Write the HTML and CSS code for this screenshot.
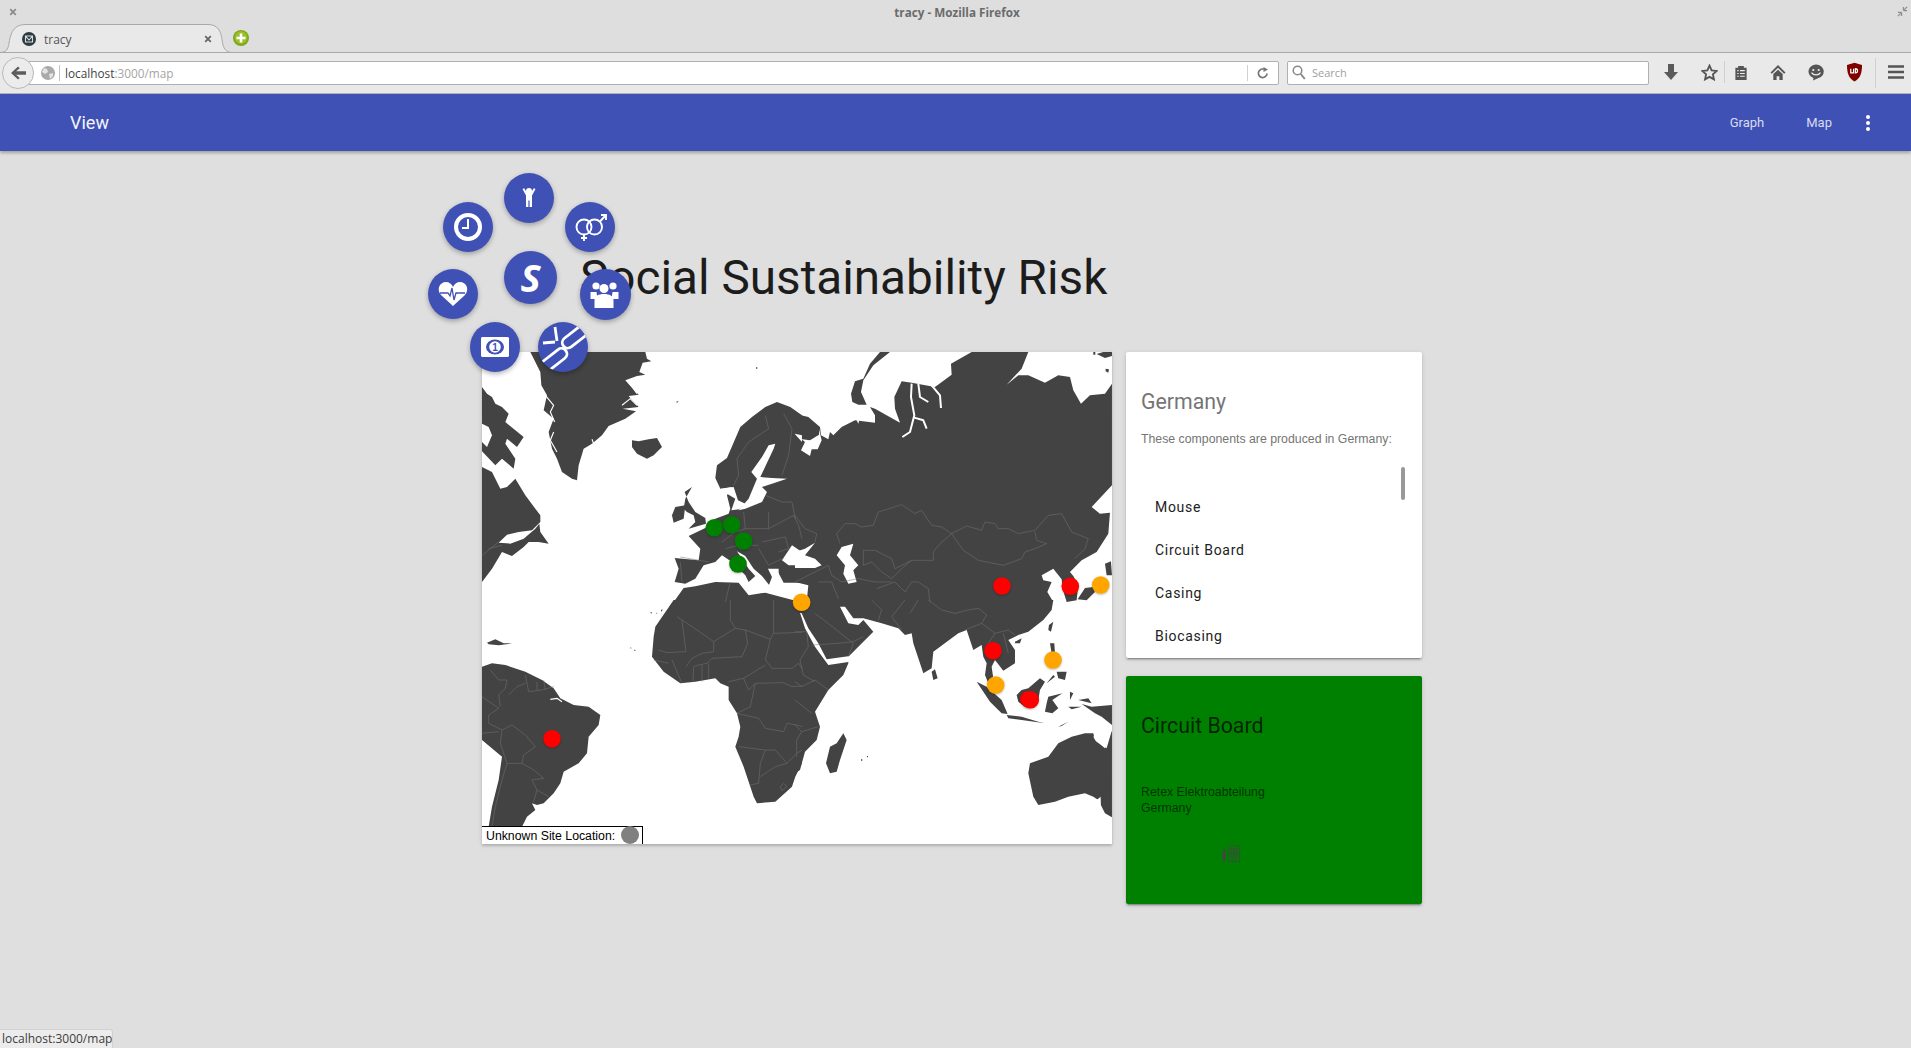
FILE: index.html
```html
<!DOCTYPE html>
<html lang="en">
<head>
<meta charset="utf-8">
<title>tracy - Mozilla Firefox</title>
<link rel="stylesheet" href="styles.css">
</head>
<body>
<header class="chrome">
  <div class="titlebar">
    <svg class="win-close" viewBox="0 0 10 10"><path d="M1.5 1.5l7 7M8.5 1.5l-7 7"/></svg>
    <span class="win-title">tracy - Mozilla Firefox</span>
    <svg class="win-restore" viewBox="0 0 12 12"><path d="M7 5V1M7 5h4M5 7v4M5 7H1M7 5l4-4M5 7l-4 4"/></svg>
  </div>
  <div class="tabstrip">
    <div class="tab">
      <svg class="tab-shape" viewBox="0 0 232 29"><path d="M0 28.500c6 0 8-3 9-9 1-7 3-19 16-19h183c10 0 13 7 14 15 1 9 4 13 10 13z"/></svg>
      <svg class="favicon" viewBox="0 0 14 14"><circle cx="7" cy="7" r="7" fill="#2d3a42"/><path d="M3.500 4h7v6h-7zM3.500 4L7 8l3.500-4" fill="none" stroke="#d8dde0" stroke-width="1.100"/></svg>
      <span class="tab-label">tracy</span>
      <svg class="tab-close" viewBox="0 0 10 10"><path d="M1.500 1.500l7 7M8.500 1.500l-7 7"/></svg>
    </div>
    <svg class="newtab" viewBox="0 0 16 16"><circle cx="8" cy="8" r="8" fill="#7fa81a"/><circle cx="8" cy="7.500" r="6.200" fill="#9bc02c"/><path d="M8 3.500v9M3.500 8h9" stroke="#fff" stroke-width="2.600"/></svg>
  </div>
  <div class="toolbar">
    <div class="back">
      <svg viewBox="0 0 16 14"><path d="M7.500 0L0 7l7.500 7 1.800-1.800L5.500 8.800H16V5.200H5.500l3.800-3.400z"/></svg>
    </div>
    <div class="urlbar">
      <svg class="globe" viewBox="0 0 14 14"><circle cx="7" cy="7" r="7" fill="#aaa"/><path d="M3 2l3 1 1 3-3 2-3-2zM8 8l4-1 0 3-3 3z" fill="#e4e4e4"/></svg>
      <span class="url"><span class="url-host">localhost</span>:3000/map</span>
      <span class="url-reload">
        <svg viewBox="0 0 12 12"><path d="M10 6.500A4.300 4.300 0 1 1 6 2h1.500" fill="none" stroke="#777" stroke-width="1.700"/><path d="M6.500 0v5L11 2.500z" fill="#777"/></svg>
      </span>
    </div>
    <div class="searchbar">
      <svg viewBox="0 0 14 15"><circle cx="5.500" cy="5.500" r="4.300" fill="none" stroke="#888" stroke-width="1.500"/><path d="M8.800 9l4 5" stroke="#888" stroke-width="2"/></svg>
      <span>Search</span>
    </div>
    <div class="tools">
      <svg class="t-down" viewBox="0 0 14 16"><path d="M4 0h6v8h4l-7 8-7-8h4z"/></svg>
      <svg class="t-star" viewBox="0 0 16 16"><path d="M8 1.500l2 4.500 4.800.500-3.600 3.200 1 4.800L8 12.100l-4.200 2.400 1-4.800L1.200 6.500 6 6z" fill="none" stroke="#555" stroke-width="1.700"/></svg>
      <span class="t-sep"></span>
      <svg class="t-clip" viewBox="0 0 14 16"><path d="M1 3h3V1h6v2h3v13H1z" fill="#555"/><path d="M3 6h1.500M6 6h5M3 9h1.500M6 9h5M3 12h1.500M6 12h5" stroke="#eee" stroke-width="1.200"/></svg>
      <svg class="t-home" viewBox="0 0 16 16"><path d="M8 0l8 8-1.500 1.200L8 3 1.500 9.200 0 8z" fill="#555"/><path d="M3 9.500L8 5l5 4.500V16H9.500v-4h-3v4H3z" fill="#555"/></svg>
      <svg class="t-chat" viewBox="0 0 16 16"><path d="M8 0a7.500 7 0 0 1 2 13.800L5 16l.5-2.400A7.500 7 0 0 1 8 0z" fill="#555"/><circle cx="5.300" cy="5.500" r="1.100" fill="#eee"/><circle cx="10.700" cy="5.500" r="1.100" fill="#eee"/><path d="M3.500 8.200c2 3 7 3 9 0" fill="none" stroke="#eee" stroke-width="1.200"/></svg>
      <svg class="t-ub" viewBox="0 0 16 20"><path d="M8 0l8 2.500c0 9-2 14.500-8 17.500-6-3-8-8.500-8-17.500z" fill="#800000"/><path d="M4 6.500v4.500h3V6.500M9 6.500v4.500c3 0 3-4.500 0-4.500z" fill="none" stroke="#fff" stroke-width="1.300"/></svg>
      <span class="t-sep t-sep-menu"></span>
      <svg class="t-menu" viewBox="0 0 16 14"><path d="M0 1.500h16M0 7h16M0 12.500h16" stroke="#555" stroke-width="2.600"/></svg>
    </div>
  </div>
</header>

<nav class="appbar">
  <span class="app-title">View</span>
  <span class="app-spacer"></span>
  <a class="app-link app-link-graph">Graph</a>
  <a class="app-link app-link-map">Map</a>
  <svg class="app-more" viewBox="0 0 4 16"><circle cx="2" cy="2" r="2"/><circle cx="2" cy="8" r="2"/><circle cx="2" cy="14" r="2"/></svg>
</nav>

<main class="page">
  <div class="content">
    <h1 class="headline">Social Sustainability Risk</h1>
    <div class="grid">
      <section class="map-card">
        <svg class="world" viewBox="0 0 630 492">
          <g class="land">
            <g class="tile-nw">
              <path d="M145 0H490L495 20 508 28 482 32 472 60 490 68 465 72 430 85 445 102 470 128 440 132 470 165 422 170 462 178 430 200 380 222 360 250 330 275 305 290 290 340 285 385 270 380 240 360 225 320 210 290 200 240 215 200 185 175 195 130 178 100 175 60 160 30z"/>
              <path d="M0 105L15 125 30 135 40 155 60 165 80 185 70 210 100 235 125 255 105 285 75 260 70 275 100 320 95 350 60 320 40 340 0 298z"/>
              <path d="M0 345L30 360 55 410 75 405 100 380 130 430 160 470 175 490 175 510 150 535 110 540 75 548 50 572 85 575 125 560 160 530 172 515 175 540 200 575 170 570 140 570 125 585 90 612 60 600 30 650 0 690z"/>
              <path d="M450 265L470 268 500 262 525 258 540 285 515 310 495 320 465 305 450 285z"/>
              <path d="M630 405L608 420 620 450 640 480 670 498 672 515 620 530 640 510 635 490 615 480 605 470 610 440z"/>
              <path d="M580 465L610 460 605 500 575 512 570 490z"/>
              <path d="M715 410L700 378 705 340 735 318 775 225 810 195 850 165 885 150 925 165 960 190V692H905L888 660 885 650 862 700 840 672 815 650 790 612 765 598 800 650 820 672 800 690 790 670 750 630 720 610 700 630 665 640 640 680 610 695 578 690 590 650 578 618 650 625 655 590 620 552 670 528 700 500 740 485 745 470 735 430 750 405z"/>
              <path d="M575 750L605 708 640 703 700 690 770 692 800 730 850 722 935 745 960 750z"/>
              <path d="M822 46h4v4h-4zM582 150l8-4-4 6z"/>
            </g>
            <g class="tile-sw">
              <path d="M575 0L520 80 515 110 510 170 545 215 595 250 640 245 700 235 715 250 740 260 740 300 765 340 775 380 770 410 760 440 785 500 815 590 825 610 880 605 930 560 940 530 960 490V0z"/>
              <path d="M0 200L30 190 70 195 130 215 180 240 215 265 235 295 275 315 320 320 355 345 350 375 320 410 315 460 290 490 245 515 235 550 215 580 185 610 165 615 150 610 160 630 135 650 120 680H20L30 620 50 540 60 470 0 420z"/>
              <path d="M15 128L40 118 65 130 90 130 50 136 20 133z"/>
              <path d="M505 36l6 2-4 3zM522 38l5 1-3 2zM537 30l5-2-3 8zM445 142l4 2-3 2zM458 148l3 5-4 0z"/>
            </g>
            <g class="tile-ne">
              <path d="M0 185L40 195 75 225 78 250 100 262 105 240 115 250 140 225 180 205 240 212 240 190 225 165 240 170 315 212 300 170 298 135 320 88 350 92 420 105 470 68 468 35 530 0H700L680 50 635 98 670 70 700 70 750 92 790 70 825 75 835 115 858 155 885 130 930 125 951 95V400L890 465 915 485 945 482 940 545 905 600 860 625 825 660 835 672 850 700 845 745 815 750 803 710 800 682 775 650 740 670 745 685 770 690 757 720 775 750H35L40 700 0 690z"/>
              <path d="M168 125L180 88 205 80 225 35 255 0H285L235 40 205 85 198 120 215 158 190 158 172 150z"/>
              <path d="M905 6L925 0H951V12L930 18zM932 50l10 2-2 10-8-4zM895 0h6v8h-6z"/>
              <path d="M930 635L948 628 951 670 935 670zM895 705L870 708 848 742 875 745 900 720z"/>
            </g>
            <g class="tile-se">
              <path d="M0 0H775L770 30 745 60 700 95 670 105 640 120 660 150 660 190 625 212 600 180 590 200 595 235 605 262 598 280 580 250 570 225 575 190 565 170 560 135 535 150 515 90 490 100 415 155 410 205 385 220 355 130 350 100 330 105 310 85 260 70 205 55 175 55 150 20 135 20 160 70 190 75 205 60 235 95 160 170V190L145 225 100 270 60 335 75 380 65 420 30 455 15 510 0 520z"/>
              <path d="M410 215L420 208 428 235 415 240z"/>
              <path d="M145 400L155 420 135 480 125 515 105 520 93 490 105 440 125 430z"/>
              <path d="M545 245L575 260 620 300 638 342 620 340 585 305z"/>
              <path d="M665 285L680 270 700 265 735 235 750 245 735 270 730 300 715 320 690 320 670 305z"/>
              <path d="M635 345L680 350 730 365 750 370 680 360 640 355z"/>
              <path d="M760 290L802 280 772 300 790 325 772 340 750 335 755 310z"/>
              <path d="M765 130L778 130 780 160 770 160zM785 215L815 215 810 240 790 235zM762 75L775 65 768 95 760 90zM660 125L680 115 675 130 660 130zM755 250L775 225 780 230zM825 275L835 280 825 300zM790 380L820 365 800 378zM820 320L860 320 830 328zM850 300L880 295 890 310z"/>
              <path d="M890 320L951 315V375L920 350 900 340 860 312z"/>
              <path d="M705 490L760 470 790 430 830 410 870 400 895 400 900 420 930 445 951 390V652L930 640 910 600 895 590 870 580 820 590 780 605 730 615 715 590 700 520z"/>
              <path d="M198 478h4v4h-4zM216 468h3v4h-3z"/>
            </g>
          </g>
          <g class="seas">
            <g class="tile-nw">
              <path d="M880 275L860 280 840 315 808 360 825 380 800 440 770 475 790 470 840 450 855 420 840 405 870 395 915 380 870 378 835 375 875 290z"/>
              <path d="M712 412L755 405 768 445 790 455 772 472 748 475 760 440 735 425z"/>
              <path d="M900 625L930 580 960 600V640H920z"/>
              <path d="M858 650L890 650 890 690 860 702 870 675z"/>
              <path d="M938 245L960 270V250z"/>
              <path d="M0 215L20 225 30 250 15 285 0 270z"/>
            </g>
            <g class="tile-ne">
              <path d="M0 600L30 590 60 572 30 610 60 620 80 640 60 648H0z"/>
              <path d="M125 610L140 585 175 575 165 610 190 640 175 655 185 690 160 695 145 665 150 640z"/>
              <path d="M0 245L30 270 18 295 45 312 50 292 68 292 80 265 72 232 72 248 45 265 22 262z"/>
              <path d="M150 195a8 8 0 1 0 .1 0zM185 205l8 0-3 10z"/>
            </g>
            <g class="tile-ne fjords">
              <path d="M350 95L348 135 358 190 345 240 322 255M358 197L385 205 395 230M370 95L375 135 400 150M410 100L435 130 438 168"/>
            </g>
            <g class="tile-nw fjords thin">
              <path d="M190 130L215 160 205 180 218 210M215 240L205 265 225 300M440 90L465 125M420 160L445 140 465 160M330 262L335 275"/>
            </g>
            <g class="tile-sw fjords thin">
              <path d="M205 298L225 295 240 305"/>
            </g>
            <g class="tile-se">
              <path d="M15 38L30 85 60 140 85 175 100 195 165 185 165 168 95 178 70 130 40 85 20 40z"/>
              <path d="M895 410L945 375 951 390 935 445 905 425z"/>
              <path d="M905 600L917 590 918 625 900 625z"/>
            </g>
          </g>
          <g class="borders">
            <g class="tile-nw">
              <path d="M850 190L860 230 800 270 765 320 770 370 755 400M905 185L930 230 920 310 900 370M785 480L790 530 760 540 720 570M860 480V530H790M860 530L935 490 950 520 960 560M840 570L910 555 920 590 890 600M850 430L900 450 930 450 940 500M595 615L680 630M595 630L600 690M730 590L770 580 830 580M830 590L860 640 900 620M0 610L50 570M745 690L730 750M20 590L60 580"/>
            </g>
            <g class="tile-sw">
              <path d="M585 50L660 100 695 125 760 85 790 90 865 118 875 100 960 97M875 0V100M745 0V60L760 85M695 125V155L660 160 630 175 612 200M600 60L612 155 555 158 530 150M790 90L797 130 780 170 690 175 675 190 650 195 635 200 633 245M865 118L850 180 870 205 930 205 950 190 960 205M850 195L785 235 740 245M785 235L800 270 820 250 905 248 930 260 960 258M820 250L805 320 765 340 830 355 850 385 905 395 915 370 945 375 960 380M770 440L850 450 880 450 915 490 945 460 960 450M850 450L835 490 830 550 805 555M835 530L880 500 915 490M895 560L905 550 915 560 900 572zM660 195V245M680 190V235M570 180L600 250M515 180L560 190M0 290L50 325 20 345 20 370 60 390 90 375 130 405 160 440 125 465 120 490 155 510 185 535 150 540 165 570 155 605M60 390L55 430 75 490 60 540 40 620 30 680M75 490H120M25 210L50 240 75 240 70 265 50 285 55 320M130 225L140 275 180 270 215 260M165 245V270M185 240L190 270M80 285L105 260 130 250M0 400L50 395M165 570L200 590"/>
            </g>
            <g class="tile-ne">
              <path d="M0 490L30 530 65 545 60 570M125 545L150 515 180 515 200 525 235 520 250 480 320 458 360 485 380 475 410 520 440 525 470 545 515 522 560 535 570 510 600 515 610 530 640 530 670 545 720 535 760 490 800 485 830 540 880 560 870 590 840 620M125 545L135 575M470 545L505 595 550 625 625 640 680 620 690 600 720 590 755 575 725 565 720 540M470 545L435 575 415 600 415 625 350 625 320 650 290 680M205 595V640L230 630 260 660 290 680M205 595H240L290 620 300 650 350 625M100 640L110 670 140 690 190 680 240 690 290 690M245 710L300 690 330 720 350 690H370L400 710 405 750M0 690L80 650 100 640M70 690L110 690 130 740"/>
            </g>
            <g class="tile-se">
              <path d="M230 0L260 30 250 60M330 0L290 50 320 90M370 0L345 40M400 0L440 30 480 40 520 30 550 25 575 45 560 70 510 90M560 70L600 100 640 90 660 105M600 100L580 130M625 100L640 160M0 95H35L40 140 15 180 25 225 60 245M60 40L125 90 175 130 160 170M50 135L130 130 175 125 205 110M0 245L20 260 60 240 100 270M0 300L50 340M0 375L20 395 70 380M20 395L5 420V470"/>
            </g>
          </g>
          <g class="markers">
            <circle class="m-green" cx="232.300" cy="175.700" r="8.800"/>
            <circle class="m-green" cx="249.700" cy="172.700" r="8.800"/>
            <circle class="m-green" cx="261.700" cy="189" r="8.800"/>
            <circle class="m-green" cx="256" cy="212" r="8.800"/>
            <circle class="m-orange" cx="319.600" cy="250.300" r="8.800"/>
            <circle class="m-red" cx="520" cy="234" r="8.800"/>
            <circle class="m-red" cx="588.300" cy="234.300" r="8.800"/>
            <circle class="m-orange" cx="618.700" cy="233" r="8.800"/>
            <circle class="m-red" cx="511" cy="298.700" r="8.800"/>
            <circle class="m-orange" cx="571" cy="308" r="8.800"/>
            <circle class="m-orange" cx="513.700" cy="333" r="8.800"/>
            <circle class="m-red" cx="546" cy="347.200" r="8"/>
            <circle class="m-red" cx="548.300" cy="347.700" r="8.800"/>
            <circle class="m-red" cx="70" cy="386.700" r="8.800"/>
          </g>
        </svg>
        <div class="legend">
          <span>Unknown Site Location:</span>
          <i class="legend-dot"></i>
        </div>
      </section>
      <aside class="side">
        <section class="card card-country">
          <h2 class="card-title">Germany</h2>
          <p class="card-text">These components are produced in Germany:</p>
          <div class="scrollbar"></div>
          <ul class="comp-list">
            <li>Mouse</li>
            <li>Circuit Board</li>
            <li>Casing</li>
            <li>Biocasing</li>
          </ul>
        </section>
        <section class="card card-site">
          <h2 class="card-title">Circuit Board</h2>
          <p class="site-text">Retex Elektroabteilung<br>Germany</p>
          <svg class="site-icon" viewBox="0 0 18 17"><circle cx="2.200" cy="5.500" r="1.500" fill="#444"/><path d="M.5 7.500h3.400v5l-.8 4H1.300l-.8-4z" fill="#444"/><path d="M6.500 1h11v15.500h-11zM8.500 3.500h7M8.500 6h7M8.500 8.500h7M8.500 11h7M9 3v8.500M12 3v8.500M15 3v8.500M10 16v-3h4v3" fill="none" stroke="#444" stroke-width=".8"/></svg>
        </section>
      </aside>
    </div>
    <div class="radial">
      <button class="rb rb-center">S</button>
      <button class="rb rb-top"><svg viewBox="-25 -25 50 50"><circle cx="0" cy="-7" r="3" fill="#fff"/><path d="M-6.500-9l1.800-.8L-2-5H2l2.700-4.800 1.800.8-3.500 6.500V9H.6V2.500H-.6V9H-3V-2.500z" fill="#fff"/></svg></button>
      <button class="rb rb-clock"><svg viewBox="-25 -25 50 50"><circle r="12" fill="none" stroke="#fff" stroke-width="4"/><path d="M0-8V1H-6" fill="none" stroke="#fff" stroke-width="2"/></svg></button>
      <button class="rb rb-gender"><svg viewBox="-25 -25 50 50"><g fill="none" stroke="#fff" stroke-width="1.900"><circle cx="-6" cy="0" r="7.500"/><circle cx="4.500" cy="0" r="7.500"/><path d="M-6 7.500v6.500M-9 11h6M10 -5.500l5.500-6M11-12h5v5"/></g></svg></button>
      <button class="rb rb-heart"><svg viewBox="-25 -25 50 50"><path d="M0 12L-12 1C-17-5-13-12-7-12-4-12-1-10 0-7 1-10 4-12 7-12 13-12 17-5 12 1z" fill="#fff"/><path d="M-13-1h8l2 3 2-8 2 12 2-7h9" fill="none" stroke="#3f51b5" stroke-width="1.300"/></svg></button>
      <button class="rb rb-group"><svg viewBox="-25 -25 50 50"><g fill="#fff"><circle cx="-9" cy="-9" r="3.600"/><circle cx="8" cy="-9" r="3.600"/><circle cx="-1" cy="-6.500" r="4.500"/><path d="M-14.500-3h6l1 7h-7zM13.500-3h-6l-1 7h7z"/><path d="M-10.500 13V5c0-4 4-6 9.500-6s9.500 2 9.500 6v8z"/></g></svg></button>
      <button class="rb rb-money"><svg viewBox="-25 -25 50 50"><path d="M-13-10H13l1 1V9l-1 1H-13l-1-1V-9z" fill="#fff"/><ellipse rx="9" ry="7.500" fill="#3f51b5"/><circle r="5.800" fill="#fff"/><text class="money-one" x="0" y="3.800" text-anchor="middle">1</text></svg></button>
      <button class="rb rb-chain"><svg viewBox="-25 -25 50 50"><g fill="none" stroke="#fff" stroke-width="2.800"><rect x="1" y="-6" width="32" height="11" rx="5.500" transform="rotate(-38)"/><rect x="-34" y="-1" width="34" height="11" rx="5.500" transform="rotate(-38)"/><path d="M-8-20l2 14M-20-4l12-1"/></g></svg></button>
    </div>
  </div>
</main>

<div class="status">localhost:3000/map</div>
</body>
</html>
```

FILE: styles.css
```css
* { box-sizing: border-box; }
html, body { margin: 0; height: 100%; }
body {
  background: #dfdfdf;
  font-family: Roboto, "Liberation Sans", sans-serif;
  overflow: hidden;
  display: flex;
  flex-direction: column;
  height: 1048px;
  position: relative;
}

/* browser chrome */
.chrome { background: #dedede; font-family: "Open Sans", sans-serif; flex: none; }
.titlebar {
  height: 24px;
  position: relative;
  display: flex;
  align-items: center;
  justify-content: center;
  padding-left: 3px;
}
.win-title { font-size: 11.700px; font-weight: 700; color: #6b6b6b; }
.win-close { position: absolute; left: 9px; top: 8px; width: 8px; height: 8px; }
.win-close path, .tab-close path { stroke: #8a8a8a; stroke-width: 2.200; fill: none; }
.win-restore { position: absolute; right: 3px; top: 6px; width: 11px; height: 11px; }
.win-restore path { stroke: #8e8e8e; stroke-width: 1.400; fill: none; }
.tabstrip {
  height: 29px;
  display: flex;
  align-items: center;
  border-bottom: 1px solid #a9a9a9;
}
.tab {
  width: 232px;
  height: 29px;
  position: relative;
  display: flex;
  align-items: center;
  padding-left: 22px;
  padding-top: 1px;
  margin-bottom: -1px;
  flex: none;
}
.tab-shape { position: absolute; left: 0; top: 0; width: 232px; height: 29px; }
.tab-shape path { fill: #e9e9e9; stroke: #a9a9a9; stroke-width: 1; }
.favicon { width: 14px; height: 14px; position: relative; flex: none; }
.tab-label { position: relative; margin-left: 8px; font-size: 12px; color: #555; flex: 1; }
.tab-close { position: relative; width: 8px; height: 8px; margin-right: 20px; }
.tab-close path { stroke: #666; }
.newtab { width: 16px; height: 16px; margin-left: 1px; }
.toolbar {
  height: 41px;
  background: #e9e9e9;
  border-bottom: 1px solid #b5b5b5;
  display: flex;
  align-items: center;
  position: relative;
  padding: 0 0 1px 2px;
}
.back {
  width: 32px;
  height: 32px;
  border-radius: 50%;
  background: #ececec;
  border: 1px solid #b9b9b9;
  display: flex;
  align-items: center;
  justify-content: center;
  position: relative;
  z-index: 1;
  flex: none;
}
.back svg { width: 15px; height: 14px; fill: #5c5c5c; }
.urlbar {
  width: 1261px;
  height: 24px;
  margin-left: -16px;
  padding-left: 22px;
  background: #fff;
  border: 1px solid #b0b0b0;
  border-radius: 0 2px 2px 0;
  display: flex;
  align-items: center;
  flex: none;
}
.globe { width: 14px; height: 14px; flex: none; }
.url {
  margin-left: 4px;
  padding-left: 5px;
  border-left: 1px solid #c4c4c4;
  font-size: 11.800px;
  line-height: 16px;
  color: #a5a5a5;
  flex: 1;
}
.url-host { color: #444; }
.url-reload {
  width: 31px;
  height: 16px;
  border-left: 1px solid #d0d0d0;
  display: flex;
  align-items: center;
  justify-content: center;
}
.url-reload svg { width: 12px; height: 12px; }
.searchbar {
  width: 362px;
  height: 24px;
  margin-left: 8px;
  background: #fff;
  border: 1px solid #b0b0b0;
  border-radius: 2px;
  display: flex;
  align-items: center;
  padding-left: 4px;
  gap: 6px;
  font-size: 11px;
  color: #a0a0a0;
  flex: none;
}
.searchbar svg { width: 14px; height: 15px; }
.tools { flex: 1; position: relative; height: 24px; }
.tools svg, .t-sep { position: absolute; }
.t-down { left: 15px; top: 3px; width: 14px; height: 16px; fill: #5a5a5a; }
.t-star { left: 52px; top: 3px; width: 17px; height: 17px; }
.t-sep { left: 75px; top: 0; height: 22px; width: 1px; background: #d0d0d0; }
.t-sep-menu { left: 226px; top: -3px; height: 30px; }
.t-clip { left: 85px; top: 4px; width: 14px; height: 15px; }
.t-home { left: 121px; top: 4px; width: 16px; height: 15px; }
.t-chat { left: 159px; top: 3px; width: 16px; height: 17px; }
.t-ub { left: 198px; top: 1px; width: 15px; height: 20px; }
.t-menu { left: 239px; top: 4px; width: 16px; height: 14px; }

/* app bar */
.appbar {
  height: 57px;
  background: #3f51b5;
  color: #fff;
  display: flex;
  align-items: center;
  padding-left: 70px;
  box-shadow: 0 2px 3px rgba(0, 0, 0, .28);
  flex: none;
  position: relative;
  z-index: 1;
}
.app-title { font-size: 18px; line-height: 28px; color: #f4f5fb; }
.app-spacer { flex: 1; }
.app-link { font-size: 13px; color: #d9dcf0; }
.app-link-map { margin-left: 42px; }
.app-more { width: 4px; height: 16px; margin: 0 41px 0 34px; fill: #fff; }

/* page */
.page { flex: 1; padding: 103px 0 0 482px; }
.content { width: 940px; position: relative; }
.headline {
  margin: 0 0 50px;
  padding-left: 98px;
  font-size: 47.700px;
  font-weight: 400;
  line-height: 49px;
  color: #1c1c1c;
  white-space: nowrap;
  height: 48px;
}
.grid { display: flex; gap: 14px; align-items: flex-start; }
.map-card {
  width: 630px;
  height: 492px;
  background: #fff;
  position: relative;
  box-shadow: 0 2px 2px rgba(0, 0, 0, .14), 0 1px 5px rgba(0, 0, 0, .12);
  flex: none;
}
.world { display: block; width: 630px; height: 492px; }
.land { fill: #434343; }
.seas { fill: #fff; }
.fjords { fill: none; stroke: #fff; stroke-width: 6; stroke-linejoin: round; }
.fjords.thin { stroke-width: 3.500; }
.borders { fill: none; stroke: #767676; stroke-width: 1.500; }
.tile-nw { transform: scale(.3333); }
.tile-ne { transform: translate(313px, 0) scale(.3333); }
.tile-sw { transform: translate(0, 248px) scale(.3333); }
.tile-se { transform: translate(313px, 248px) scale(.3333); }
.markers circle { filter: drop-shadow(0 1px 1px rgba(0, 0, 0, .25)); }
.m-green { fill: #008000; }
.m-red { fill: #ff0000; }
.m-orange { fill: #ffa500; }
.legend {
  position: absolute;
  left: 0;
  bottom: 0;
  width: 161px;
  height: 18px;
  background: #fff;
  border-top: 1px solid #000;
  border-right: 1px solid #000;
  padding-left: 4px;
  display: flex;
  align-items: center;
  justify-content: space-between;
  font: 12.300px "Liberation Sans", sans-serif;
  color: #000;
}
.legend-dot {
  width: 18px;
  height: 18px;
  border-radius: 50%;
  background: #808080;
  margin-right: 3px;
  margin-top: -1px;
  flex: none;
}

.side { width: 296px; display: flex; flex-direction: column; gap: 18px; }
.card {
  border-radius: 2px;
  position: relative;
  padding: 38px 15px 0;
  box-shadow: 0 2px 2px rgba(0, 0, 0, .14), 0 3px 1px -2px rgba(0, 0, 0, .2), 0 1px 5px rgba(0, 0, 0, .12);
}
.card-country { height: 306px; background: #fff; overflow: hidden; }
.card-site { height: 228px; background: #008000; }
.card-title { margin: 0; font-size: 21.300px; font-weight: 400; line-height: 24px; color: #757575; }
.card-site .card-title { color: rgba(0, 0, 0, .72); }
.card-text {
  margin: 17px 0 0;
  font: 12.300px/16px "Liberation Sans", sans-serif;
  color: #757575;
  white-space: nowrap;
}
.scrollbar {
  position: absolute;
  left: 275px;
  top: 115px;
  width: 4px;
  height: 33px;
  border-radius: 2px;
  background: #999;
}
.comp-list { list-style: none; margin: 39px 0 0; padding: 0 0 0 14px; }
.comp-list li {
  height: 43px;
  line-height: 43px;
  font-size: 14px;
  letter-spacing: .7px;
  color: #212121;
}
.site-text {
  margin: 46px 0 0;
  font: 12.300px/16px "Liberation Sans", sans-serif;
  color: rgba(0, 0, 0, .62);
}
.site-icon { display: block; width: 18px; height: 17px; margin: 29px 0 0 81px; }

/* radial menu */
.radial { position: absolute; left: 0; top: 0; }
.rb {
  position: absolute;
  width: 50px;
  height: 50px;
  border: 0;
  padding: 0;
  border-radius: 50%;
  background: #3f51b5;
  box-shadow: 0 2px 5px rgba(0, 0, 0, .3);
  overflow: hidden;
}
.rb svg { display: block; width: 50px; height: 50px; }
.money-one { font: 700 10px "Liberation Sans", sans-serif; fill: #3f51b5; }
.rb-center {
  left: 22px;
  top: -3px;
  width: 53px;
  height: 53px;
  color: #fff;
  font: italic 700 38px/53px "Open Sans", sans-serif;
  text-align: center;
}
.rb-top { left: 22px; top: -81px; }
.rb-clock { left: -39px; top: -52px; }
.rb-gender { left: 83px; top: -52px; }
.rb-heart { left: -54px; top: 15px; }
.rb-group { left: 98px; top: 15px; width: 51px; height: 51px; }
.rb-money { left: -12px; top: 68px; }
.rb-chain { left: 56px; top: 68px; }

.status {
  position: absolute;
  left: 0;
  bottom: 0;
  width: 113px;
  height: 19px;
  background: #ececec;
  border: 1px solid #d2d2d2;
  border-width: 1px 1px 0 0;
  border-radius: 0 3px 0 0;
  padding-left: 2px;
  font: 12px/18px "Open Sans", sans-serif;
  color: #3c3c3c;
  white-space: nowrap;
}
```
